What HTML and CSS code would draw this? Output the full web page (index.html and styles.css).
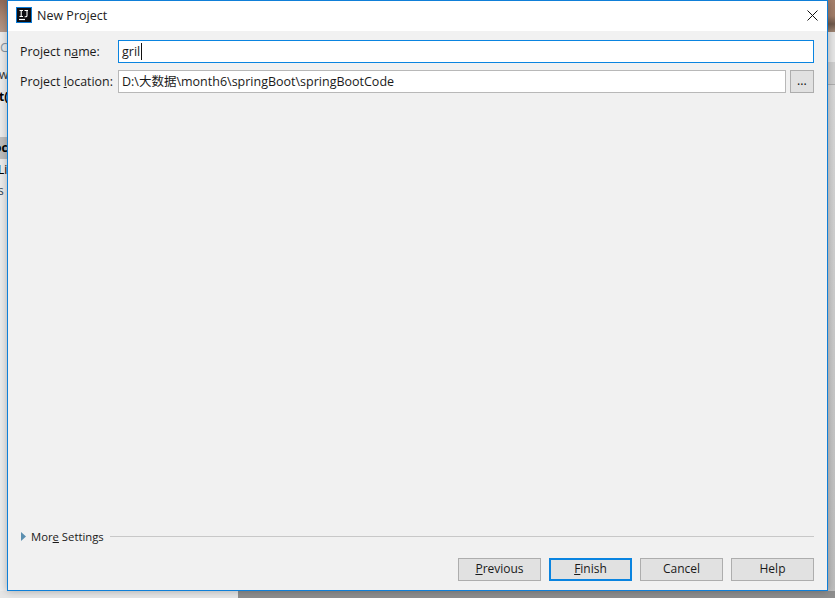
FILE: index.html
```html
<!DOCTYPE html>
<html lang="en">
<head>
<meta charset="utf-8">
<title>New Project</title>
<link rel="stylesheet" href="styles.css">
</head>
<body>
<div class="desktop">
  <div class="bg-photo-left"></div>
  <div class="bg-photo-right"></div>
  <div class="bg-ide-left">
    <span class="bg-txt bg-c">C</span>
    <span class="bg-txt bg-w">w</span>
    <span class="bg-txt bg-t">t(</span>
    <span class="bg-sel"><span class="bg-txt bg-oc">oc</span></span>
    <span class="bg-txt bg-li">Li</span>
    <span class="bg-txt bg-s">s</span>
  </div>
  <div class="bg-ide-right"></div>
  <div class="bg-bottom-light"></div>
  <div class="bg-bottom-dark"></div>

  <div class="dialog">
    <header class="titlebar">
      <svg class="app-icon" width="16" height="16" viewBox="0 0 16 16" aria-hidden="true">
        <rect x="0.5" y="0.5" width="15" height="15" fill="#0d0d12" stroke="#0a7ad6"/>
        <path d="M3.500 3.500h3.500M5.200 3.500v6M3.500 9.500h3.500M8.500 3.500h3.500M11 3.500v5c0 1-.6 1.300-1.300 1.300H8.600" fill="none" stroke="#fff" stroke-width="1.100"/>
        <path d="M3 12.500h6" stroke="#fff" stroke-width="1.200"/>
      </svg>
      <span class="title">New Project</span>
      <svg class="close" width="11" height="11" viewBox="0 0 11 11" aria-hidden="true">
        <path d="M.5.5l10 10M10.500.5l-10 10" stroke="#111" stroke-width="1"/>
      </svg>
    </header>
    <main class="body">
      <div class="form">
        <label class="label">Project n<u>a</u>me:</label>
        <div class="field field-focus"><span>gril</span><i class="caret"></i></div>
        <label class="label">Project <u>l</u>ocation:</label>
        <div class="field-row">
          <div class="field field-grow"><span>D:\大数据\month6\springBoot\springBootCode</span></div>
          <button class="browse" type="button">...</button>
        </div>
      </div>
      <div class="spacer"></div>
      <div class="more">
        <svg class="tri" width="5" height="9" viewBox="0 0 5 9" aria-hidden="true"><path d="M0 0l5 4.500-5 4.500z" fill="#5b8fb0"/></svg>
        <span class="more-label">Mor<u>e</u> Settings</span>
        <span class="rule"></span>
      </div>
      <footer class="buttons">
        <button class="btn" type="button"><u>P</u>revious</button>
        <button class="btn btn-default" type="button"><u>F</u>inish</button>
        <button class="btn" type="button">Cancel</button>
        <button class="btn" type="button">Help</button>
      </footer>
    </main>
  </div>
</div>
</body>
</html>
```
FILE: styles.css
```css
* { box-sizing: border-box; }
html, body { margin: 0; padding: 0; }
body {
  width: 835px;
  height: 598px;
  overflow: hidden;
  font-family: "Open Sans", "Noto Sans CJK SC", sans-serif;
  font-size: 12.400px;
  color: #1a1a1a;
}
.desktop { position: relative; width: 835px; height: 598px; background: #a3a3a3; overflow: hidden; }

.bg-photo-left { position: absolute; left: 0; top: 0; width: 8px; height: 32px;
  background: linear-gradient(180deg, #8f6a58 0%, #a98672 50%, #b49a8c 100%); }
.bg-photo-right { position: absolute; left: 828px; top: 0; width: 7px; height: 32px;
  background: linear-gradient(180deg, #a5806c 0%, #a07c68 50%, #6f5a4c 75%, #a08674 100%); }
.bg-ide-left { position: absolute; left: 0; top: 32px; width: 8px; height: 566px; background: #ececec; }
.bg-ide-right { position: absolute; left: 828px; top: 32px; width: 7px; height: 568px;
  background: linear-gradient(180deg, #e6e6e6 0, #e6e6e6 30px, #cfcfcf 30px, #cfcfcf 52px, #aeaeae 52px, #aeaeae 53px, #d8d8d8 53px, #bdbdbd 100%); }
.bg-bottom-light { position: absolute; left: 0; top: 591px; width: 238px; height: 7px; background: #e6e6e6; }
.bg-bottom-dark { position: absolute; left: 238px; top: 591px; width: 597px; height: 7px; background: #8e8e8e; }

.bg-txt { position: absolute; left: 0; font-size: 12px; line-height: 14px; color: #111; }
.bg-c { top: 8px; left: 0; color: #8a97a3; font-size: 13px; }
.bg-w { top: 36px; left: -1px; color: #333; }
.bg-t { top: 58px; left: -1px; font-weight: 700; color: #000; }
.bg-sel { position: absolute; left: 0; top: 105px; width: 8px; height: 22px; background: #bdbdbd; }
.bg-oc { top: 4px; left: -6px; font-weight: 700; color: #000; }
.bg-li { top: 131px; left: -2px; color: #000; }
.bg-s { top: 152px; left: -2px; color: #345; }

.dialog {
  position: absolute;
  left: 7px;
  top: 0;
  width: 821px;
  height: 591px;
  background: #f1f1f1;
  border: 1px solid #0f7fd8;
  box-shadow: 0 0 8px rgba(0, 0, 0, .28);
  display: flex;
  flex-direction: column;
}
.titlebar {
  height: 30px;
  flex: none;
  background: #fff;
  display: flex;
  align-items: center;
  padding: 0 9px 2px 8px;
}
.app-icon { flex: none; }
.title { margin-left: 5px; font-size: 12.500px; color: #222; flex: 1; }
.close { flex: none; margin-right: 0; }

.body { flex: 1; display: flex; flex-direction: column; padding: 9px 13px 9px 12px; min-height: 0; }
.form {
  display: grid;
  grid-template-columns: 98px 1fr;
  row-gap: 7px;
  align-items: center;
}
.label { white-space: nowrap; }
.field {
  height: 23px;
  background: #fff;
  border: 1px solid #b8b8b8;
  display: flex;
  align-items: center;
  padding-left: 3px;
  white-space: nowrap;
  font-size: 12.500px;
}
.field-focus { border-color: #0a84e0; }
.caret { width: 1px; height: 17px; background: #111; margin-left: 1px; }
.field-row { display: flex; gap: 4px; }
.field-grow { flex: 1; padding-bottom: 2px; }
.browse {
  width: 24px;
  height: 23px;
  flex: none;
  padding: 0 0 3px;
  background: #e1e1e1;
  border: 1px solid #adadad;
  font: inherit;
  color: #111;
}
.spacer { flex: 1; }
.more { display: flex; align-items: center; height: 14px; padding-left: 1px; position: relative; top: -1px; }
.tri { flex: none; }
.more-label { margin-left: 5px; white-space: nowrap; font-size: 11.300px; }
.rule { flex: 1; height: 1px; background: #c8c8c8; margin-left: 6px; }
.buttons { display: flex; justify-content: flex-end; gap: 8px; margin-top: 14px; }
.btn {
  width: 83px;
  height: 23px;
  padding: 0 0 2px;
  background: #e1e1e1;
  border: 1px solid #adadad;
  font: inherit;
  font-size: 12px;
  color: #1a1a1a;
}
.btn-default { border: 2px solid #0a84e0; }
```
